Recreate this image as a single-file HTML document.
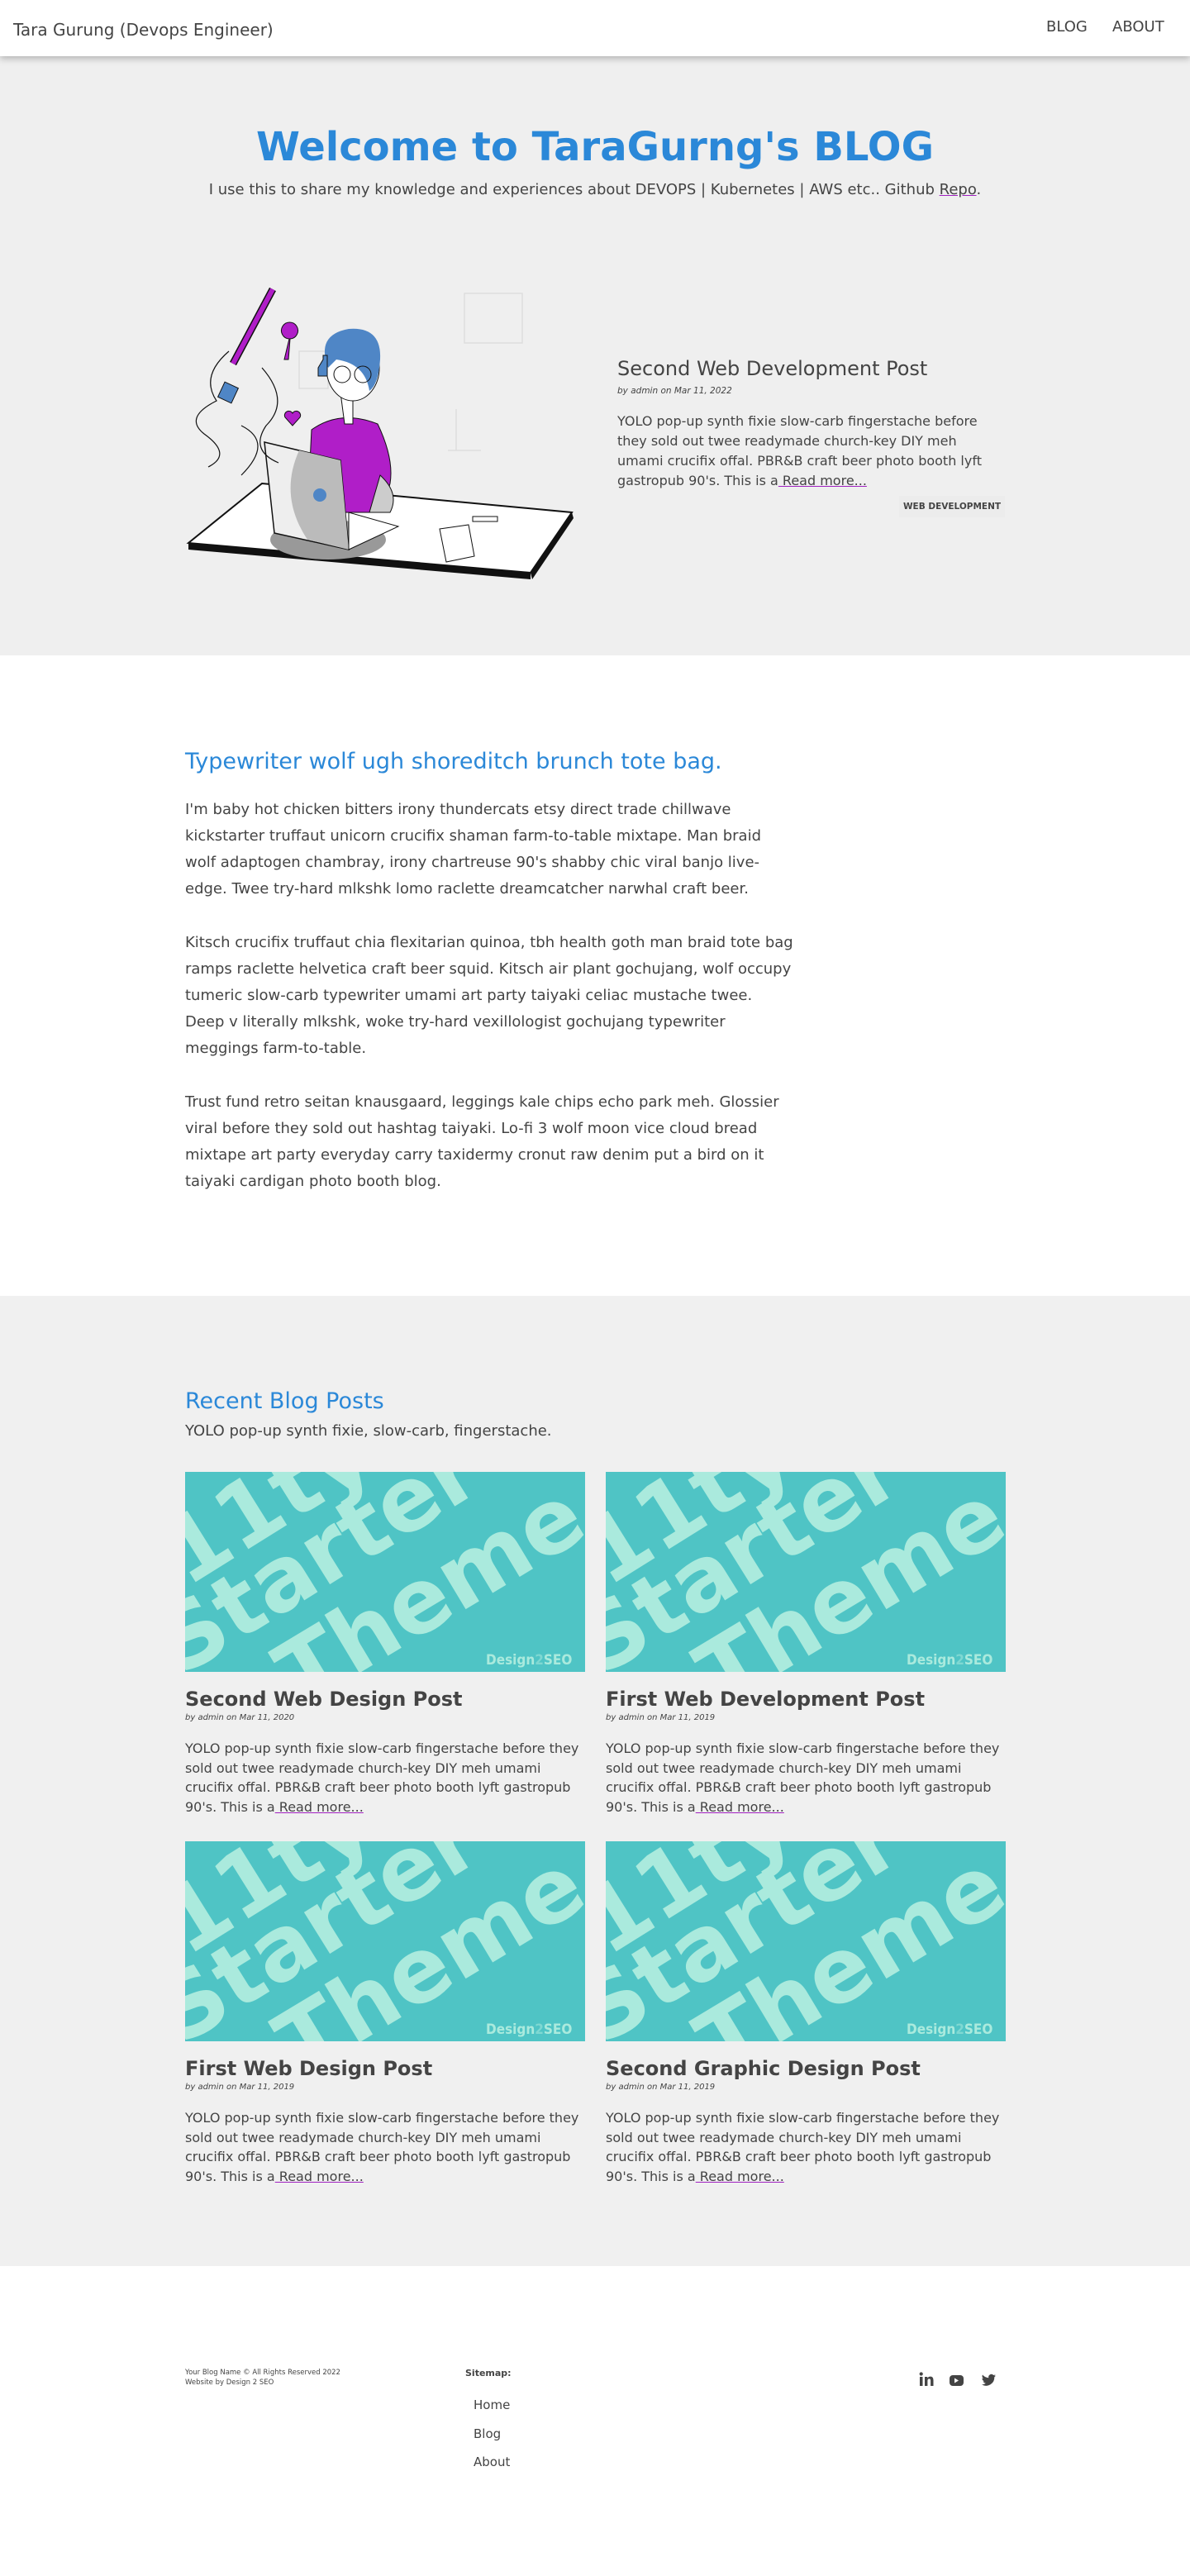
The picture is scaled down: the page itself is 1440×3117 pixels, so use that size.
<!DOCTYPE html>
<html><head><meta charset="utf-8"><style>
*{margin:0;padding:0;box-sizing:border-box}
body{width:1440px;height:3117px;font-family:"DejaVu Sans","Liberation Sans",sans-serif;color:#444;background:#fff;position:relative;overflow:hidden}
.abs{position:absolute;white-space:nowrap}
header{position:absolute;left:0;top:0;width:1440px;height:68px;background:#fff;box-shadow:0 3px 8px rgba(0,0,0,.25);z-index:2}
.hero{position:absolute;left:0;top:68px;width:1440px;height:725px;background:#efefef}
.gray2{position:absolute;left:0;top:1568px;width:1440px;height:1174px;background:#f0f0f0}
.blue{color:#2b88d8}
a.rm{color:#444;text-decoration:underline;text-decoration-color:#a020c0}
.p18{font-size:18px;line-height:32px}
.card{position:absolute;width:484px}
.card .t{font-size:24px;font-weight:bold;margin-top:13px;line-height:32px}
.card .m{font-size:10px;font-style:italic;line-height:14px}
.card .b{font-size:16px;line-height:23.5px;margin-top:18px;white-space:nowrap}
</style></head><body>
<header>
<div class="abs" style="left:16px;top:24px;font-size:20px">Tara Gurung (Devops Engineer)</div>
<div class="abs" style="left:1266px;top:22px;font-size:18px">BLOG</div>
<div class="abs" style="left:1346px;top:22px;font-size:18px">ABOUT</div>
</header>
<div class="hero"></div>
<div class="abs blue" style="left:0;width:1440px;text-align:center;top:150px;font-size:48px;font-weight:bold">Welcome to TaraGurng's BLOG</div>
<div class="abs" style="left:0;width:1440px;text-align:center;top:219px;font-size:18px">I use this to share my knowledge and experiences about DEVOPS | Kubernetes | AWS etc.. Github <a class="rm" href="#">Repo</a>.</div>

<svg class="abs" style="left:222px;top:335px" width="480" height="372" viewBox="0 0 480 372">
<g fill="none" stroke="#ddd" stroke-width="1.5"><rect x="340" y="20" width="70" height="60"/><rect x="140" y="90" width="35" height="45"/><path d="M330 160 v50 M320 210 h40"/></g>
<path d="M6 322 L95 250 L470 285 L420 358 Z" fill="#fff" stroke="#111" stroke-width="2"/>
<path d="M6 322 L420 358 L420 366 L6 330 Z" fill="#111"/>
<path d="M420 358 L470 285 L472 292 L422 366Z" fill="#111"/>
<ellipse cx="175" cy="318" rx="70" ry="24" fill="#999"/>
<path d="M155 185 Q190 160 235 178 Q255 220 250 250 L240 285 L150 285 Z" fill="#b01ec8" stroke="#111"/>
<path d="M238 240 Q262 262 250 285 L225 285 Z" fill="#ccc" stroke="#111"/>
<path d="M190 140 L195 178 L205 178 L205 140Z" fill="#fff" stroke="#111"/>
<ellipse cx="205" cy="110" rx="32" ry="40" fill="#fff" stroke="#111"/>
<path d="M175 110 Q160 70 200 63 Q240 60 238 100 Q236 130 225 138 Q220 105 185 100Z" fill="#4f86c6"/>
<circle cx="192" cy="118" r="10" fill="none" stroke="#111"/><circle cx="217" cy="118" r="10" fill="none" stroke="#111"/>
<path d="M98 200 L190 222 L200 330 L110 310 Z" fill="#eee" stroke="#111" stroke-width="1.5"/>
<path d="M140 210 L190 222 L200 330 L150 318 Q115 265 140 210Z" fill="#bbb"/>
<circle cx="165" cy="264" r="8" fill="#4f86c6"/>
<path d="M200 330 L260 302 L200 285 Z" fill="#fff" stroke="#111"/>
<path d="M108 15 L60 105" stroke="#111" stroke-width="9"/><path d="M108 15 L60 105" stroke="#b01ec8" stroke-width="6"/>
<path d="M128 75 a10 10 0 1 1 1 0 l-2 25 h-5z" fill="#b01ec8" stroke="#111"/>
<path d="M163 110 l6 -10 v-5 h5 v25 h-11z" fill="#4f86c6" stroke="#111"/>
<rect x="45" y="130" width="18" height="20" fill="#4f86c6" stroke="#111" transform="rotate(25 54 140)"/>
<path d="M132 180 l-9 -10 a5 5 0 0 1 9 -5 a5 5 0 0 1 9 5Z" fill="#b01ec8" stroke="#111"/>
<path d="M55 90 Q20 120 40 150 Q0 170 25 190 Q60 215 30 230 M95 110 Q130 150 100 180 Q80 210 115 225 M70 180 Q110 200 70 240" fill="none" stroke="#111" stroke-width="1.2"/>
<rect x="350" y="290" width="30" height="6" fill="#fff" stroke="#111"/>
<path d="M310 305 L345 300 L352 338 L318 345Z" fill="#fff" stroke="#111"/>
</svg>

<div class="abs" style="left:747px;top:432px;font-size:24px">Second Web Development Post</div>
<div class="abs" style="left:747px;top:467px;font-size:10.5px;font-style:italic">by admin on Mar 11, 2022</div>
<div class="abs" style="left:747px;top:498px;font-size:16px;line-height:24px">YOLO pop-up synth fixie slow-carb fingerstache before<br>they sold out twee readymade church-key DIY meh<br>umami crucifix offal. PBR&amp;B craft beer photo booth lyft<br>gastropub 90's. This is a<a class="rm" href="#"> Read more...</a></div>
<div class="abs" style="left:1088px;top:600px;width:128px;height:26px;font-size:10.5px;font-weight:bold;background:#ececec;text-align:center;line-height:26px">WEB DEVELOPMENT</div>

<div class="abs blue" style="left:224px;top:906px;font-size:27px">Typewriter wolf ugh shoreditch brunch tote bag.</div>
<div class="abs p18" style="left:224px;top:964px">I'm baby hot chicken bitters irony thundercats etsy direct trade chillwave<br>kickstarter truffaut unicorn crucifix shaman farm-to-table mixtape. Man braid<br>wolf adaptogen chambray, irony chartreuse 90's shabby chic viral banjo live-<br>edge. Twee try-hard mlkshk lomo raclette dreamcatcher narwhal craft beer.</div>
<div class="abs p18" style="left:224px;top:1125px">Kitsch crucifix truffaut chia flexitarian quinoa, tbh health goth man braid tote bag<br>ramps raclette helvetica craft beer squid. Kitsch air plant gochujang, wolf occupy<br>tumeric slow-carb typewriter umami art party taiyaki celiac mustache twee.<br>Deep v literally mlkshk, woke try-hard vexillologist gochujang typewriter<br>meggings farm-to-table.</div>
<div class="abs p18" style="left:224px;top:1318px">Trust fund retro seitan knausgaard, leggings kale chips echo park meh. Glossier<br>viral before they sold out hashtag taiyaki. Lo-fi 3 wolf moon vice cloud bread<br>mixtape art party everyday carry taxidermy cronut raw denim put a bird on it<br>taiyaki cardigan photo booth blog.</div>

<div class="gray2"></div>
<div class="abs blue" style="left:224px;top:1680px;font-size:27px">Recent Blog Posts</div>
<div class="abs" style="left:224px;top:1721px;font-size:18px">YOLO pop-up synth fixie, slow-carb, fingerstache.</div>

<svg width="0" height="0" style="position:absolute"><defs><clipPath id="cp"><rect width="484" height="242"/></clipPath><g id="img" clip-path="url(#cp)">
<rect width="484" height="242" fill="#4fc4c5"/>
<g fill="#aaeadd" font-family="DejaVu Sans,sans-serif" font-weight="bold">
<text x="2" y="140" font-size="108" transform="rotate(-32 2 140)">11ty</text>
<text x="-4" y="248" font-size="108" transform="rotate(-32 -4 248)">Starter</text>
<text x="140" y="286" font-size="108" transform="rotate(-31 140 286)">Theme</text>
</g>
<rect x="358" y="210" width="126" height="32" fill="#4fc4c5"/>
<text x="364" y="233" font-size="17" font-weight="bold" fill="#aaeadd" font-family="DejaVu Sans Condensed,DejaVu Sans,sans-serif">Design<tspan fill="#7fd8d2">2</tspan>SEO</text>
</g></defs></svg>

<div class="card" style="left:224px;top:1781px"><svg width="484" height="242"><use href="#img"/></svg><div class="t">Second Web Design Post</div><div class="m">by admin on Mar 11, 2020</div><div class="b">YOLO pop-up synth fixie slow-carb fingerstache before they<br>sold out twee readymade church-key DIY meh umami<br>crucifix offal. PBR&amp;B craft beer photo booth lyft gastropub<br>90's. This is a<a class="rm" href="#"> Read more...</a></div></div>
<div class="card" style="left:733px;top:1781px"><svg width="484" height="242"><use href="#img"/></svg><div class="t">First Web Development Post</div><div class="m">by admin on Mar 11, 2019</div><div class="b">YOLO pop-up synth fixie slow-carb fingerstache before they<br>sold out twee readymade church-key DIY meh umami<br>crucifix offal. PBR&amp;B craft beer photo booth lyft gastropub<br>90's. This is a<a class="rm" href="#"> Read more...</a></div></div>
<div class="card" style="left:224px;top:2228px"><svg width="484" height="242"><use href="#img"/></svg><div class="t">First Web Design Post</div><div class="m">by admin on Mar 11, 2019</div><div class="b">YOLO pop-up synth fixie slow-carb fingerstache before they<br>sold out twee readymade church-key DIY meh umami<br>crucifix offal. PBR&amp;B craft beer photo booth lyft gastropub<br>90's. This is a<a class="rm" href="#"> Read more...</a></div></div>
<div class="card" style="left:733px;top:2228px"><svg width="484" height="242"><use href="#img"/></svg><div class="t">Second Graphic Design Post</div><div class="m">by admin on Mar 11, 2019</div><div class="b">YOLO pop-up synth fixie slow-carb fingerstache before they<br>sold out twee readymade church-key DIY meh umami<br>crucifix offal. PBR&amp;B craft beer photo booth lyft gastropub<br>90's. This is a<a class="rm" href="#"> Read more...</a></div></div>

<div class="abs" style="left:224px;top:2866px;font-size:8.5px;line-height:11.5px">Your Blog Name © All Rights Reserved 2022<br>Website by Design 2 SEO</div>
<div class="abs" style="left:563px;top:2865px;font-size:11px;font-weight:bold">Sitemap:</div>
<div class="abs" style="left:573px;top:2893px;font-size:15px;line-height:34.5px">Home<br>Blog<br>About</div>
<svg class="abs" style="left:1110px;top:2868px" width="100" height="22" viewBox="0 0 100 22">
<g fill="#444"><rect x="3" y="8" width="3.5" height="11"/><circle cx="4.7" cy="4.5" r="2.1"/><path d="M9 8h3.3v1.6q1.2-2 3.6-2 3.6 0 3.6 4.5V19h-3.4v-6.3q0-2.3-1.7-2.3-2 0-2 2.4V19H9z"/>
<rect x="39" y="6" width="17" height="13" rx="4"/><path d="M45 9.5v6l5-3z" fill="#fff"/>
<path d="M95 6.5q-1 .5-2 .6 1.1-.7 1.5-1.9-1 .6-2.2.8a3.5 3.5 0 0 0-6 3.2A10 10 0 0 1 79 5.5a3.5 3.5 0 0 0 1 4.7q-.8 0-1.6-.4a3.5 3.5 0 0 0 2.8 3.4q-.8.2-1.6.1a3.5 3.5 0 0 0 3.3 2.4A7 7 0 0 1 78 17.2a10 10 0 0 0 15.3-8.9q1-.7 1.7-1.8z"/></g>
</svg>
</body></html>
